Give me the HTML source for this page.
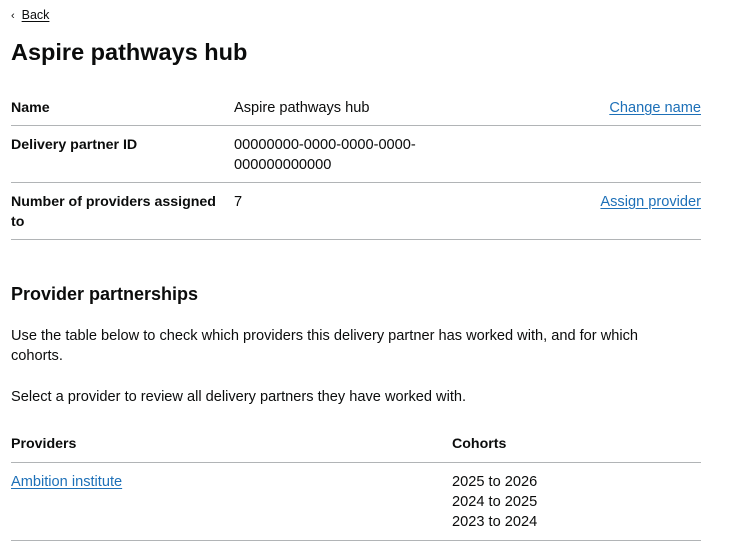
<!DOCTYPE html>
<html><head><style>
body{margin:0;width:734px;height:545px;background:#fff;font-family:"Liberation Sans",Arial,sans-serif;color:#0b0c0c;position:relative;overflow:hidden}
.a{position:absolute;font-size:14.6px;line-height:20px;white-space:nowrap}
.b{font-weight:bold;font-size:14.2px}
.l{color:#1d70b8;text-decoration:underline;text-underline-offset:2px}
.hr{position:absolute;left:11px;width:690px;height:1px;background:#b1b4b6}
</style></head><body>
<div class="a" style="left:11px;top:5px;font-size:12.5px"><span style="font-size:11px">&#8249;</span>&nbsp; <span style="text-decoration:underline;text-underline-offset:2px">Back</span></div>
<div class="a" style="left:11px;top:37px;font-size:23.5px;line-height:30px;font-weight:bold">Aspire pathways hub</div>

<div class="a b" style="left:11px;top:98px">Name</div>
<div class="a" style="left:234px;top:98px">Aspire pathways hub</div>
<div class="a l" style="right:33px;top:98px">Change name</div>
<div class="hr" style="top:125px"></div>

<div class="a b" style="left:11px;top:135px">Delivery partner ID</div>
<div class="a" style="left:234px;top:135px">00000000-0000-0000-0000-<br>000000000000</div>
<div class="hr" style="top:182px"></div>

<div class="a b" style="left:11px;top:192px">Number of providers assigned<br>to</div>
<div class="a" style="left:234px;top:192px">7</div>
<div class="a l" style="right:33px;top:192px">Assign provider</div>
<div class="hr" style="top:239px"></div>

<div class="a" style="left:11px;top:282px;font-size:18px;line-height:24px;font-weight:bold">Provider partnerships</div>
<div class="a" style="left:11px;top:326px">Use the table below to check which providers this delivery partner has worked with, and for which<br>cohorts.</div>
<div class="a" style="left:11px;top:387px">Select a provider to review all delivery partners they have worked with.</div>

<div class="a b" style="left:11px;top:434px">Providers</div>
<div class="a b" style="left:452px;top:434px">Cohorts</div>
<div class="hr" style="top:462px"></div>
<div class="a l" style="left:11px;top:472px">Ambition institute</div>
<div class="a" style="left:452px;top:472px">2025 to 2026<br>2024 to 2025<br>2023 to 2024</div>
<div class="hr" style="top:540px"></div>
</body></html>
